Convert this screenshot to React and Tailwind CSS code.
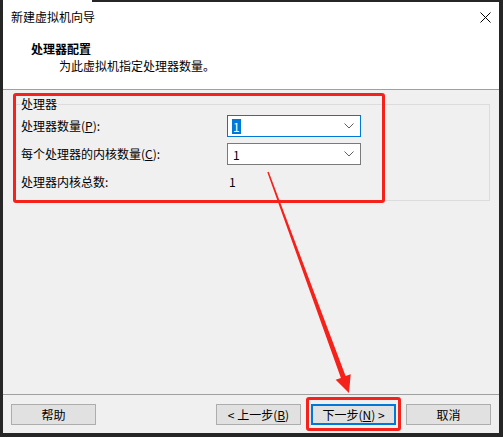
import React from 'react';

const font = { fontFamily: '"Noto Sans CJK SC", "Microsoft YaHei", sans-serif' };

const Chevron = () => (
  <svg width="10" height="6" viewBox="0 0 10 6" className="mr-[2px] shrink-0">
    <path d="M0.5 0.5 L5 5 L9.5 0.5" fill="none" stroke="#606060" strokeWidth="1" />
  </svg>
);

const Combo = ({ focused, value }) => (
  <div
    className={`flex h-[22px] w-[134px] items-center justify-between bg-white pl-[4px] pr-[4px] ${
      focused ? 'border border-[#0078d7]' : 'border border-[#7a7a7a]'
    }`}
  >
    {focused ? (
      <span className="bg-[#0078d7] px-[1px] leading-[15px] text-white">{value}</span>
    ) : (
      <span className="px-[1px] leading-[15px]">{value}</span>
    )}
    <Chevron />
  </div>
);

const Button = ({ children, focused }) => (
  <button
    className={`flex h-[21px] w-[85px] items-center justify-center bg-[#e1e1e1] text-[12px] text-black ${
      focused ? 'border-2 border-[#0078d7]' : 'border border-[#adadad]'
    }`}
  >
    {children}
  </button>
);

export default function App() {
  return (
    <div className="relative h-[437px] w-[503px] overflow-hidden bg-[#262626] text-[12px] text-black" style={font}>
      <div className="flex h-[433px] w-[496px] flex-col bg-[#f0f0f0] ml-[3px]">
        {/* header */}
        <div className="h-[90px] border-b border-[#a0a0a0] bg-white">
          <div className="flex h-[34px] items-center justify-between pl-[8px] pr-[8px]">
            <span className="leading-[16px]">新建虚拟机向导</span>
            <svg width="11" height="11" viewBox="0 0 11 11">
              <path d="M0.5 0.5 L10.5 10.5 M10.5 0.5 L0.5 10.5" stroke="#000" strokeWidth="1" />
            </svg>
          </div>
          <div className="mt-[7px] pl-[28px] font-bold leading-[16px]">处理器配置</div>
          <div className="mt-[1px] pl-[56px] leading-[16px]">为此虚拟机指定处理器数量。</div>
        </div>

        {/* body */}
        <div className="flex-1 pt-[14px] pl-[12px]">
          <div className="relative h-[97px] w-[475px] border border-[#dcdcdc] pt-[10px] pl-[5px]">
            <span className="absolute -top-[9px] left-[4px] bg-[#f0f0f0] px-[1px] leading-[16px]">处理器</span>
            <div className="flex flex-col gap-[6px]">
              <div className="flex h-[22px] items-center">
                <span className="w-[206px]">
                  处理器数量(<span className="underline">P</span>):
                </span>
                <Combo focused value="1" />
              </div>
              <div className="flex h-[22px] items-center">
                <span className="w-[206px]">
                  每个处理器的内核数量(<span className="underline">C</span>):
                </span>
                <Combo value="1" />
              </div>
              <div className="flex h-[22px] items-center">
                <span className="w-[206px]">处理器内核总数:</span>
                <span className="pl-[2px]">1</span>
              </div>
            </div>
          </div>
        </div>

        {/* footer */}
        <div className="flex h-[39px] justify-between border-t border-[#a0a0a0] pt-[9px] pl-[8px] pr-[8px]">
          <Button>帮助</Button>
          <div className="flex gap-[10px]">
            <Button>
              &lt; 上一步(<span className="underline">B</span>)
            </Button>
            <Button focused>
              下一步(<span className="underline">N</span>) &gt;
            </Button>
            <Button>取消</Button>
          </div>
        </div>
      </div>

      {/* annotations */}
      <div className="pointer-events-none absolute left-[13px] top-[93px] h-[110px] w-[372px] rounded-[3px] border-[3px] border-[#f5221b]" />
      <div className="pointer-events-none absolute left-[306px] top-[397px] h-[34px] w-[95px] rounded-[3px] border-[3px] border-[#f5221b]" />
      <svg className="pointer-events-none absolute left-0 top-0" width="503" height="437">
        <polygon
          points="267.3,172.3 268.7,171.7 345.6,376.1 350.7,374.2 349,393 335.7,379.8 340.9,377.9"
          fill="#f5221b"
        />
      </svg>
      <div className="absolute left-[92px] top-0 h-[2px] w-[411px] bg-[#262626]" />
    </div>
  );
}
